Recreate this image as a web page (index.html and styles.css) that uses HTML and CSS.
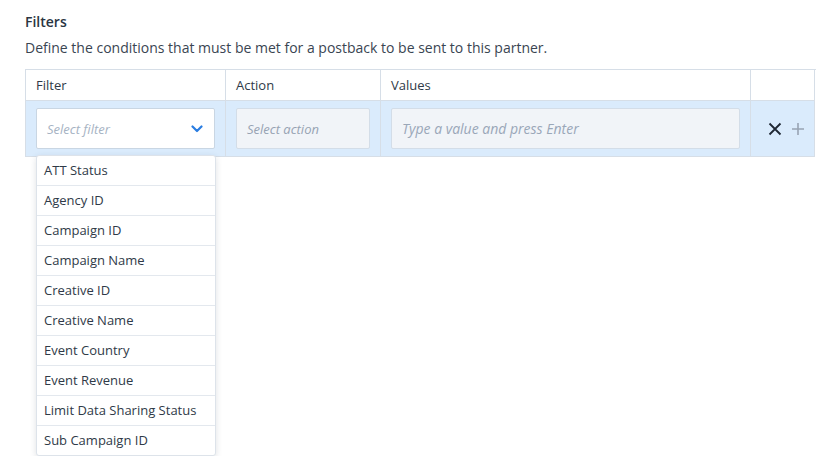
FILE: index.html
```html
<!DOCTYPE html>
<html lang="en">
<head>
    <meta charset="UTF-8">
    <title>Filters</title>
    <link rel="stylesheet" href="styles.css">
</head>
<body>
    <div class="section">
        <h2>Filters</h2>
        <p class="desc">Define the conditions that must be met for a postback to be sent to this partner.</p>

        <div class="filters-table">
            <div class="head">Filter</div>
            <div class="head">Action</div>
            <div class="head">Values</div>
            <div class="head"></div>

            <div class="cell">
                <div class="select">
                    <span class="placeholder">Select filter</span>
                    <svg class="chevron" width="12" height="8" viewBox="0 0 12 8">
                        <path d="M1.5 1.5 L6 6 L10.5 1.5" fill="none" stroke="#2a7de1" stroke-width="2.2" stroke-linecap="round" stroke-linejoin="round"/>
                    </svg>
                </div>
            </div>
            <div class="cell">
                <div class="field disabled"><span class="placeholder">Select action</span></div>
            </div>
            <div class="cell">
                <div class="field"><span class="placeholder">Type a value and press Enter</span></div>
            </div>
            <div class="cell actions">
                <svg width="14" height="14" viewBox="0 0 14 14">
                    <path d="M1.5 1.5 L12.5 12.5 M12.5 1.5 L1.5 12.5" stroke="#1f2733" stroke-width="1.8"/>
                </svg>
                <svg width="14" height="14" viewBox="0 0 14 14">
                    <path d="M7 1 V13 M1 7 H13" stroke="#98a4b3" stroke-width="1.6"/>
                </svg>
            </div>
        </div>

        <ul class="menu">
            <li>ATT Status</li>
            <li>Agency ID</li>
            <li>Campaign ID</li>
            <li>Campaign Name</li>
            <li>Creative ID</li>
            <li>Creative Name</li>
            <li>Event Country</li>
            <li>Event Revenue</li>
            <li>Limit Data Sharing Status</li>
            <li>Sub Campaign ID</li>
        </ul>
    </div>
</body>
</html>
```

FILE: styles.css
```css
body {
    margin: 0;
    font-family: 'Open Sans', sans-serif;
    color: #2f3a48;
    background: #ffffff;
}

.section {
    padding: 12px 18px 0 25px;
}

h2 {
    margin: 0;
    font-size: 14px;
    font-weight: 600;
    line-height: 20px;
    color: #2a3542;
}

.desc {
    margin: 6px 0 0;
    font-size: 14px;
    line-height: 20px;
    color: #3a4552;
}

.filters-table {
    margin-top: 11px;
    display: grid;
    grid-template-columns: 200px 155px 370px 64px;
    border-top: 1px solid #d6dee7;
    border-left: 1px solid #d6dee7;
    width: 790px;
}

.head,
.cell {
    border-right: 1px solid #d6dee7;
    border-bottom: 1px solid #d6dee7;
}

.head {
    height: 30px;
    padding: 0 10px;
    font-size: 13px;
    line-height: 30px;
    color: #2f3a48;
}

.cell {
    background: #daebfc;
    padding: 7px 10px;
    height: 41px;
}

.select,
.field {
    box-sizing: border-box;
    height: 41px;
    border: 1px solid #d3dde8;
    border-radius: 2px;
    padding: 0 10px;
    display: flex;
    align-items: center;
}

.select {
    background: #ffffff;
    border-color: #c9d6e3;
    justify-content: space-between;
}

.chevron {
    margin-right: 1px;
}

.field {
    background: #f1f4f8;
}

.placeholder {
    font-size: 13px;
    font-style: italic;
    color: #a6b3c3;
}

.field .placeholder {
    font-size: 14px;
    color: #9aa7b8;
}

.field.disabled .placeholder {
    font-size: 13px;
    color: #97a3b3;
}

.actions {
    display: flex;
    align-items: center;
    gap: 9px;
    padding: 7px 0 7px 17px;
}

.menu {
    position: relative;
    width: 180px;
    margin: -2px 0 0 11px;
    padding: 0;
    list-style: none;
    background: #ffffff;
    border: 1px solid #dde3ea;
    border-radius: 3px;
    box-shadow: 0 2px 6px rgba(40, 55, 75, 0.15);
    box-sizing: border-box;
}

.menu li {
    height: 30px;
    box-sizing: border-box;
    padding: 0 7px;
    line-height: 29px;
    font-size: 13px;
    color: #2f3a48;
    border-bottom: 1px solid #e3e8ee;
}

.menu li:last-child {
    border-bottom: none;
    height: 29px;
}
```
